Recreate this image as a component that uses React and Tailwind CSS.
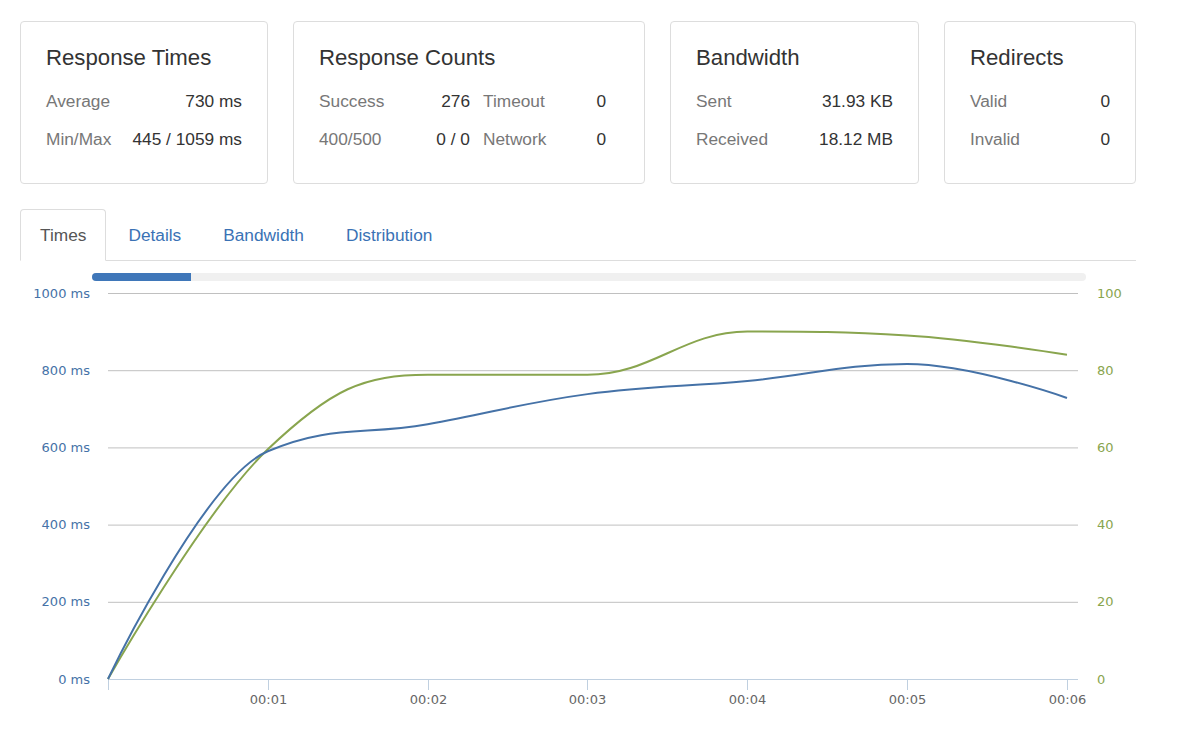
import React from "react";

const BLUE = "#4572A7";
const GREEN = "#89A54E";

/* ===== CHART DATA (one point per second) ===== */
const times = [0, 590, 660, 738, 772, 816, 728];
const counts = [0, 59.5, 78.8, 78.8, 90, 89, 84];

const X0 = 108;
const STEP = 159.83;
const Y0 = 679;
const PX = 386; // px per full axis

const toPts = (vals, max) =>
  vals.map((v, i) => [X0 + i * STEP, Y0 - (v / max) * PX]);

// highcharts style spline
function splinePath(pts) {
  const s = 1.5;
  const d = 2.5;
  const ctrl = pts.map((p, i) => {
    const prev = pts[i - 1];
    const next = pts[i + 1];
    if (!prev || !next) return null;
    const [x, y] = p;
    const lcx = (s * x + prev[0]) / d;
    let lcy = (s * y + prev[1]) / d;
    const rcx = (s * x + next[0]) / d;
    let rcy = (s * y + next[1]) / d;
    const corr = ((rcy - lcy) * (rcx - x)) / (rcx - lcx) + y - rcy;
    lcy += corr;
    rcy += corr;
    if (lcy > prev[1] && lcy > y) {
      lcy = Math.max(prev[1], y);
      rcy = 2 * y - lcy;
    } else if (lcy < prev[1] && lcy < y) {
      lcy = Math.min(prev[1], y);
      rcy = 2 * y - lcy;
    }
    if (rcy > next[1] && rcy > y) {
      rcy = Math.max(next[1], y);
      lcy = 2 * y - rcy;
    } else if (rcy < next[1] && rcy < y) {
      rcy = Math.min(next[1], y);
      lcy = 2 * y - rcy;
    }
    return { l: [lcx, lcy], r: [rcx, rcy] };
  });
  let path = `M ${pts[0][0]} ${pts[0][1]}`;
  for (let i = 1; i < pts.length; i++) {
    const c1 = ctrl[i - 1] ? ctrl[i - 1].r : pts[i - 1];
    const c2 = ctrl[i] ? ctrl[i].l : pts[i];
    path += ` C ${c1[0]} ${c1[1]} ${c2[0]} ${c2[1]} ${pts[i][0]} ${pts[i][1]}`;
  }
  return path;
}

function Card({ title, width, children, pr = "pr-[25px]" }) {
  return (
    <div
      className={`${width} h-[163px] shrink-0 border border-[#dddddd] rounded-[4px] bg-white pt-[24px] pl-[25px] ${pr}`}
    >
      <h3 className="text-[22.2px] leading-[24px] text-[#333333]">{title}</h3>
      <div className="mt-[12px]">{children}</div>
    </div>
  );
}

function Row({ label, value }) {
  return (
    <div className="flex justify-between text-[17.3px] leading-[38px]">
      <span className="text-[#777777]">{label}</span>
      <span className="text-[#333333]">{value}</span>
    </div>
  );
}

function Chart() {
  const grid = [0, 200, 400, 600, 800, 1000];
  const blue = splinePath(toPts(times, 1000));
  const green = splinePath(toPts(counts, 100));

  return (
    <svg
      width="1187"
      height="448"
      viewBox="0 281 1187 448"
      className="block"
      fontFamily="'DejaVu Sans', Verdana, sans-serif"
      fontSize="13"
    >
      {/* GRID */}
      {grid.map((g, i) => {
        const y = Y0 - (g / 1000) * PX + 0.5;
        return (
          <g key={g}>
            {i > 0 && (
              <line x1={X0} x2={1078} y1={y} y2={y} stroke="#C0C0C0" strokeWidth="1" />
            )}
            <text x="90" y={y + 4} textAnchor="end" fill={BLUE}>
              {g} ms
            </text>
            <text x="1097" y={y + 4} fill={GREEN}>
              {g / 10}
            </text>
          </g>
        );
      })}

      {/* X AXIS */}
      <line x1={X0} x2={1078} y1={Y0 + 0.5} y2={Y0 + 0.5} stroke="#C0D0E0" strokeWidth="1" />
      {times.map((_, i) => {
        const x = Math.round(X0 + i * STEP) + 0.5;
        return (
          <g key={i}>
            <line x1={x} x2={x} y1={Y0} y2={Y0 + 11} stroke="#C0D0E0" strokeWidth="1" />
            {i > 0 && (
              <text x={x} y="704" textAnchor="middle" fill="#666666">
                00:0{i}
              </text>
            )}
          </g>
        );
      })}

      {/* SERIES */}
      <path d={green} fill="none" stroke={GREEN} strokeWidth="2" strokeLinejoin="round" />
      <path d={blue} fill="none" stroke={BLUE} strokeWidth="2" strokeLinejoin="round" />
    </svg>
  );
}

export default function App() {
  const tabs = ["Times", "Details", "Bandwidth", "Distribution"];

  return (
    <div className="w-[1187px] min-h-[729px] bg-white pt-[21px] font-['Liberation_Sans',Arial,sans-serif]">
      {/* STAT CARDS */}
      <div className="flex gap-[25px] pl-[20px]">
        <Card title="Response Times" width="w-[248px]">
          <Row label="Average" value="730 ms" />
          <Row label="Min/Max" value="445 / 1059 ms" />
        </Card>

        <Card title="Response Counts" width="w-[352px]" pr="pr-[38px]">
          <div className="grid grid-cols-[100px_51px_103px_33px] text-[17.3px] leading-[38px]">
            <span className="text-[#777777]">Success</span>
            <span className="text-right text-[#333333]">276</span>
            <span className="pl-[13px] text-[#777777]">Timeout</span>
            <span className="text-right text-[#333333]">0</span>
            <span className="text-[#777777]">400/500</span>
            <span className="text-right text-[#333333]">0 / 0</span>
            <span className="pl-[13px] text-[#777777]">Network</span>
            <span className="text-right text-[#333333]">0</span>
          </div>
        </Card>

        <Card title="Bandwidth" width="w-[249px]">
          <Row label="Sent" value="31.93 KB" />
          <Row label="Received" value="18.12 MB" />
        </Card>

        <Card title="Redirects" width="w-[192px]">
          <Row label="Valid" value="0" />
          <Row label="Invalid" value="0" />
        </Card>
      </div>

      {/* TABS */}
      <ul className="mt-[25px] ml-[20px] w-[1116px] flex border-b border-[#dddddd]">
        {tabs.map((t, i) => (
          <li key={t} className="-mb-px mr-[2px]">
            <a
              className={`block h-[52px] px-[19px] text-[17.3px] leading-[50px] border rounded-t-[4px] ${
                i === 0
                  ? "border-[#dddddd] border-b-transparent bg-white text-[#555555]"
                  : "border-transparent text-[#3a72b5]"
              }`}
            >
              {t}
            </a>
          </li>
        ))}
      </ul>

      {/* PROGRESS */}
      <div className="mt-[12px] ml-[92px] w-[994px] h-[8px] rounded-full bg-[#f0f0f0] overflow-hidden">
        <div className="w-[99px] h-full bg-[#3f77b9]" />
      </div>

      <Chart />
    </div>
  );
}
